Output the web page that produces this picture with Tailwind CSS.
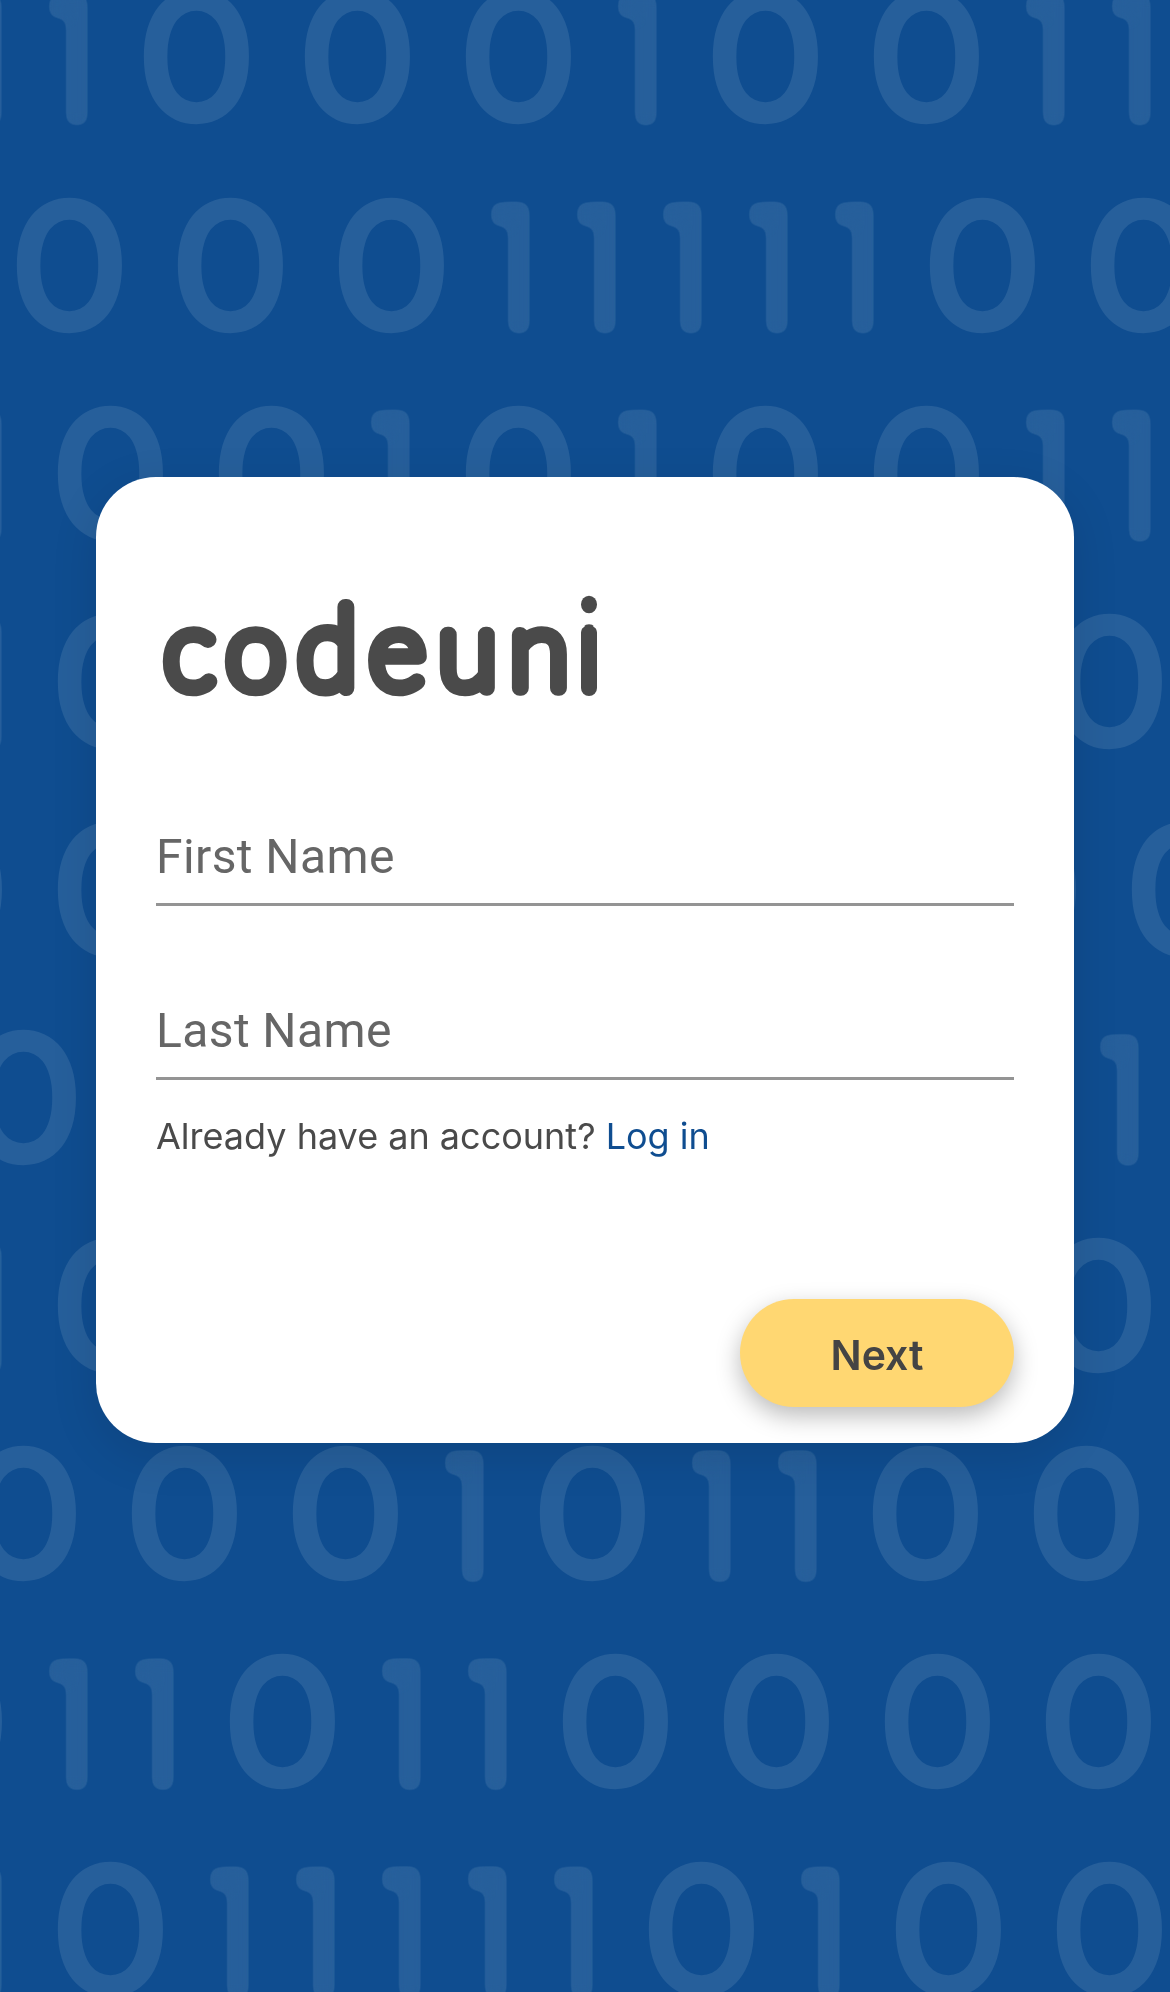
<!DOCTYPE html>
<html lang="en">
<head>
<meta charset="utf-8">
<title>codeuni – Sign up</title>
<script src="https://cdn.jsdelivr.net/npm/@tailwindcss/browser@4"></script>
</head>
<body class="relative h-[1992px] w-[1170px] overflow-hidden bg-[#0f4d90] font-['Inter',sans-serif] text-[#4a4a4a]">

<!-- Binary wallpaper -->
<svg aria-hidden="true" class="absolute inset-0 h-full w-full fill-[#265f9b] font-thin" viewBox="0 0 1170 1992" stroke-linejoin="round" text-anchor="middle">
  <!-- thickens hairline digits, then rounds their corners -->
  <filter id="rounded" filterUnits="userSpaceOnUse" x="-40" y="-40" width="1250" height="2080" color-interpolation-filters="sRGB">
    <feMorphology operator="dilate" radius="9"/>
    <feGaussianBlur stdDeviation="5.5"/>
    <feComponentTransfer><feFuncA type="linear" slope="9" intercept="-3.6"/></feComponentTransfer>
  </filter>
  <g id="zeros" class="stroke-[#265f9b] font-['Lato',sans-serif] text-[160.5px]" stroke-width="20.5"></g>
  <g id="ones" class="font-['Inter',sans-serif] text-[151.5px]" filter="url(#rounded)"></g>
</svg>

<main class="relative flex justify-center pt-[477px]">
  <form class="flex h-[966px] w-[978px] flex-col rounded-[60px] bg-white px-[60px] shadow-[0_12px_48px_rgba(0,0,0,0.11)]">
    <svg class="mt-[105px] h-[130px] w-[460px] fill-[#4a4a4a] stroke-[#4a4a4a] font-['Lato',sans-serif] text-[108px] font-thin" viewBox="156 582 460 130" stroke-width="15.6" stroke-linejoin="round" text-anchor="middle">
      <clipPath id="stem"><rect x="581" y="624.3" width="16" height="71.7" rx="8"/></clipPath>
      <text y="687.5" x="189.3 255.7">co</text>
      <text transform="translate(327 687.7) scale(1 1.04)">d</text>
      <text y="687.5" x="397 467.5 539">eun</text>
      <!-- the i carries its own round dot, higher than the font's -->
      <text y="687.5" x="589" stroke-width="18" clip-path="url(#stem)">i</text>
      <ellipse cx="589" cy="604.5" rx="8" ry="8.7" stroke="none"/>
    </svg>

    <label class="mt-[93px] flex h-[101px] items-center border-b-3 border-[#949494] pt-[6px] font-['Roboto',sans-serif] text-[48px] leading-none tracking-[0.4px] text-[#666]">First Name</label>
    <label class="mt-[73px] flex h-[101px] items-center border-b-3 border-[#949494] pt-[6px] font-['Roboto',sans-serif] text-[48px] leading-none tracking-[0.4px] text-[#666]">Last Name</label>

    <p class="mt-[29px] text-[36px] leading-[54px]">Already have an account? <a href="#" class="text-[#0f4d90]">Log in</a></p>

    <button type="button" class="mt-[136px] h-[108px] w-[274px] self-end rounded-full bg-[#ffd772] pt-[5px] text-[41px] font-semibold leading-none text-[#444] shadow-[0_9px_24px_rgba(0,0,0,0.27)]">Next</button>
  </form>
</main>

<script>
  // Each row: the x where its first digit cell starts, then the digits.
  const rows = [
    [-55, '11000100110'],
    [-10, '0001111100'],
    [-55, '1001010011'],
    [-55, '10011011110'],
    [-130, '00001111100'],
    [-56, '000000111'],
    [-55, '1000011110'],
    [-56, '000101100'],
    [-130, '0110110000'],
    [-55, '10111110100'],
  ];
  const glyph = {
    0: { layer: 'zeros', advance: 161, origin: 79.3, baseline: 113.4, dx: 0, warp: 'scale(1.05 1)' },
    1: { layer: 'ones', advance: 86, origin: 46, baseline: 115.4, dx: -9.2, warp: 'skewY(44.5) scale(0.7 1)' },
  };
  rows.forEach(([x, digits], r) => {
    for (const d of digits) {
      const g = glyph[d];
      const t = document.createElementNS('http://www.w3.org/2000/svg', 'text');
      t.setAttribute('transform', `translate(${x + g.origin} ${g.baseline + 208.1 * r}) ${g.warp}`);
      t.setAttribute('x', g.dx);
      t.textContent = d;
      document.getElementById(g.layer).appendChild(t);
      x += g.advance;
    }
  });
</script>
</body>
</html>
